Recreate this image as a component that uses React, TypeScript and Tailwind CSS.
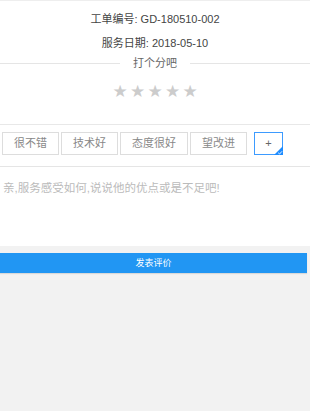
import React, { useState } from 'react';

const tags: string[] = ['很不错', '技术好', '态度很好', '望改进'];

const App: React.FC = () => {
  const [rating, setRating] = useState<number>(0);
  const [comment, setComment] = useState<string>('');

  return (
    <div
      className="min-h-[411px] bg-[#f2f2f2] text-[11px]"
      style={{ fontFamily: '"Liberation Sans", "Noto Sans CJK SC", sans-serif' }}
    >
      <div className="bg-white border-t border-[#eeeeee]">
        <div className="flex flex-col items-center pt-[10px] text-[#444444]">
          <div className="h-[16px] leading-[16px]">工单编号: GD-180510-002</div>
          <div className="mt-[8px] h-[16px] leading-[16px]">服务日期: 2018-05-10</div>
        </div>

        <div className="mt-[5px] flex items-center">
          <div className="h-px flex-1 bg-[#e5e5e5]" />
          <span className="px-[13px] leading-[14px] text-[#666666]">打个分吧</span>
          <div className="h-px flex-1 bg-[#e5e5e5]" />
        </div>

        <div className="mt-[12px] flex justify-center gap-[1px]">
          {[1, 2, 3, 4, 5].map((i) => (
            <button
              key={i}
              type="button"
              onClick={() => setRating(i)}
              className={`w-[16.5px] text-[17px] leading-[18px] ${i <= rating ? 'text-[#ffb400]' : 'text-[#cccccc]'}`}
              style={{ fontFamily: '"DejaVu Sans", sans-serif' }}
            >
              ★
            </button>
          ))}
        </div>

        <div className="mt-[24px] h-px bg-[#e8e8e8]" />

        <div className="flex items-center pl-[2px] pt-[7px] pb-[11px]">
          <div className="flex gap-[2px]">
            {tags.map((t) => (
              <span
                key={t}
                className="h-[23px] border border-[#dddddd] px-[11px] leading-[21px] text-[#888888]"
              >
                {t}
              </span>
            ))}
          </div>
          <div className="relative ml-[7px] h-[23px] w-[29px] border border-[#3d9bff] text-center leading-[20px] text-[#666666]">
            +
            <svg className="absolute -bottom-px -right-px" width="9" height="9" viewBox="0 0 9 9">
              <path d="M9 0 L9 9 L0 9 Z" fill="#1e8cff" />
              <path d="M4.2 6.8 L5.6 8 L8 5.3" stroke="#ffffff" strokeWidth="0.9" fill="none" />
            </svg>
          </div>
        </div>

        <div className="h-px bg-[#e5e5e5]" />

        <textarea
          value={comment}
          onChange={(e) => setComment(e.target.value)}
          placeholder="亲,服务感受如何,说说他的优点或是不足吧!"
          className="block h-[79px] w-full resize-none px-[3px] pt-[13px] text-[11.5px] leading-[16px] text-[#555555] outline-none placeholder:text-[#bbbbbb]"
        />
      </div>

      <div className="pt-[7px] pr-[3px]">
        <button
          type="button"
          className="block h-[20px] w-full bg-[#2196f3] text-[9px] leading-[20px] text-white shadow-[0_1px_1px_rgba(0,0,0,0.1)]"
        >
          发表评价
        </button>
      </div>
    </div>
  );
};

export default App;
